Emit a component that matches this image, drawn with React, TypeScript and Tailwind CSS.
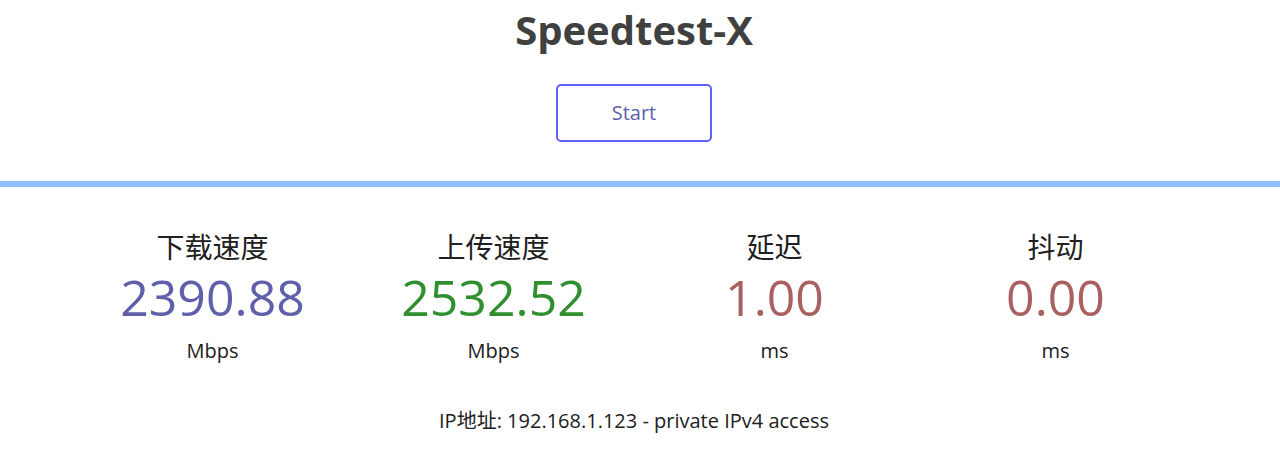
const font = {
  fontFamily: '"Open Sans", "Noto Sans CJK SC", sans-serif',
};

const stats = [
  { label: "下载速度", value: "2390.88", unit: "Mbps", color: "text-[#6060aa]" },
  { label: "上传速度", value: "2532.52", unit: "Mbps", color: "text-[#309030]" },
  { label: "延迟", value: "1.00", unit: "ms", color: "text-[#aa6060]" },
  { label: "抖动", value: "0.00", unit: "ms", color: "text-[#aa6060]" },
];

export default function App() {
  return (
    <div style={font} className="w-[1268px] h-[464px] bg-white text-[#202020]">
      <h1 className="pt-[2px] text-center text-[40px] font-bold leading-[56px] text-[#404040]">
        Speedtest-X
      </h1>
      <div className="mt-[26px] flex justify-center">
        <button className="h-[58px] w-[156px] rounded-[5px] border-2 border-[#6060ff] text-[20px] text-[#6060aa]">
          Start
        </button>
      </div>
      <div className="mt-[39px] h-[6px] w-[1280px] bg-[#91bdff]" />
      <div className="mx-auto mt-[43px] grid w-[1124px] grid-cols-4">
        {stats.map((s) => (
          <div key={s.label} className="flex flex-col items-center">
            <div className="text-[28px] leading-[34px]">{s.label}</div>
            <div className={"text-[50px] leading-[66px] " + s.color}>{s.value}</div>
            <div className="mt-[9px] text-[20px] leading-[24px]">{s.unit}</div>
          </div>
        ))}
      </div>
      <div className="mt-[46px] text-center text-[20px] leading-[24px]">
        IP地址: 192.168.1.123 - private IPv4 access
      </div>
    </div>
  );
}
